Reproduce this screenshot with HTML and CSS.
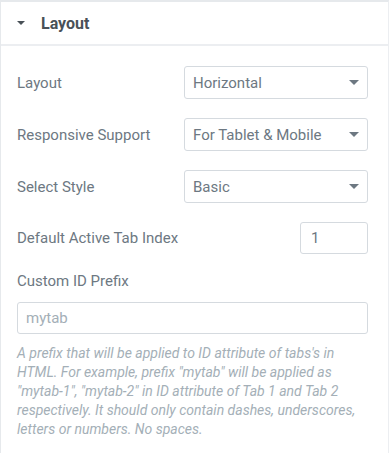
FILE: index.html
```html
<!DOCTYPE html>
<html lang="en">
<head>
  <meta charset="UTF-8" />
  <title>Layout</title>
  <link rel="stylesheet" href="styles.css">
</head>
<body>
  <div class="panel">
    <div class="section-head">
      <span class="caret"></span>
      <span class="section-title">Layout</span>
    </div>

    <div class="section-body">
      <div class="control">
        <label>Layout</label>
        <div class="select">
          <span>Horizontal</span>
          <span class="caret small"></span>
        </div>
      </div>

      <div class="control">
        <label>Responsive Support</label>
        <div class="select">
          <span>For Tablet &amp; Mobile</span>
          <span class="caret small"></span>
        </div>
      </div>

      <div class="control">
        <label>Select Style</label>
        <div class="select">
          <span>Basic</span>
          <span class="caret small"></span>
        </div>
      </div>

      <div class="control">
        <label>Default Active Tab Index</label>
        <div class="number">1</div>
      </div>

      <div class="control block">
        <label>Custom ID Prefix</label>
        <div class="text-input">mytab</div>
        <p class="desc">A prefix that will be applied to ID attribute of tabs's in HTML. For example, prefix "mytab" will be applied as "mytab-1", "mytab-2" in ID attribute of Tab 1 and Tab 2 respectively. It should only contain dashes, underscores, letters or numbers. No spaces.</p>
      </div>
    </div>
  </div>
</body>
</html>
```

FILE: styles.css
```css
body {
  margin: 0;
  padding: 0;
  background: #fff;
  font-family: Roboto, "Liberation Sans", sans-serif;
}
.panel {
  width: 389px;
  height: 453px;
  border-top: 2px solid #e6e9ec;
  border-left: 1px solid #e6e9ec;
  border-right: 1px solid #eceef1;
  box-sizing: border-box;
  overflow: hidden;
}
.section-head {
  display: flex;
  align-items: center;
  gap: 16px;
  height: 42px;
  padding-left: 16px;
  border-bottom: 2px solid #eceef1;
}
.caret {
  width: 0;
  height: 0;
  border-left: 4px solid transparent;
  border-right: 4px solid transparent;
  border-top: 4px solid #495157;
}
.caret.small {
  border-left-width: 5px;
  border-right-width: 5px;
  border-top: 5px solid #6d7882;
}
.section-title {
  font-size: 16px;
  font-weight: bold;
  color: #495157;
}
.section-body {
  padding: 20px 20px 0 16px;
}
.control {
  display: flex;
  justify-content: space-between;
  align-items: center;
  margin-bottom: 19px;
}
.control label {
  font-size: 15px;
  color: #6d7882;
}
.select {
  display: flex;
  justify-content: space-between;
  align-items: center;
  width: 184px;
  height: 33px;
  box-sizing: border-box;
  padding: 0 8px;
  border: 1px solid #d5dadf;
  border-radius: 3px;
  font-size: 15px;
  color: #6d7882;
}
.number {
  width: 68px;
  height: 32px;
  box-sizing: border-box;
  padding-left: 10px;
  border: 1px solid #d5dadf;
  border-radius: 3px;
  font-size: 15px;
  color: #6d7882;
  line-height: 30px;
}
.control.block {
  display: block;
  margin-top: -2px;
}
.text-input {
  margin-top: 12px;
  height: 32px;
  box-sizing: border-box;
  padding-left: 8px;
  border: 1px solid #d5dadf;
  border-radius: 3px;
  font-size: 15px;
  line-height: 30px;
  color: #a4afb7;
}
.desc {
  margin: 10px 0 0;
  font-size: 14px;
  font-style: italic;
  line-height: 19px;
  color: #a4afb7;
}
```
